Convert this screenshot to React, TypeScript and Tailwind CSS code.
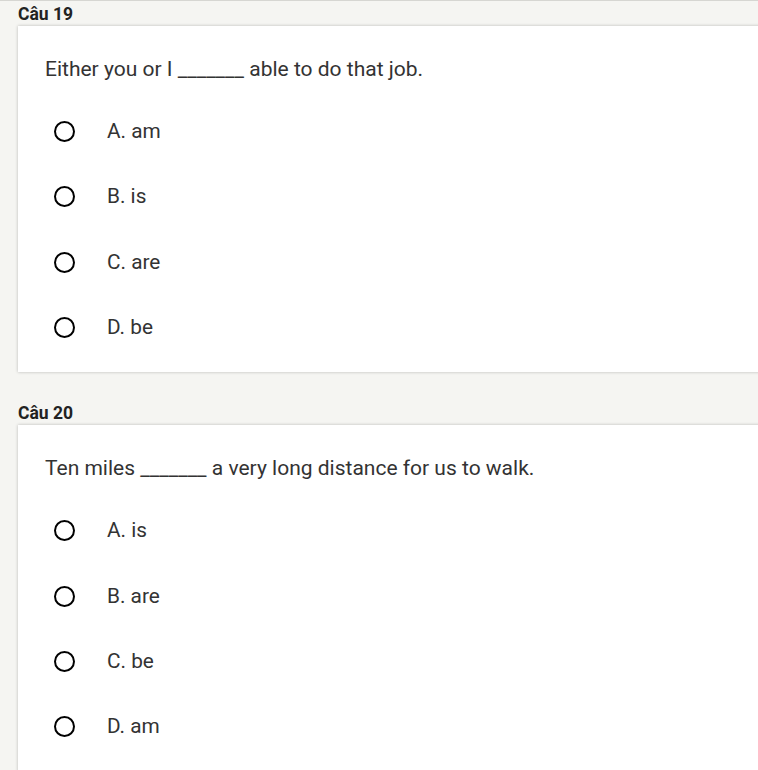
const questions = [
  {
    title: "Câu 19",
    text: "Either you or I _______ able to do that job.",
    options: ["A. am", "B. is", "C. are", "D. be"],
  },
  {
    title: "Câu 20",
    text: "Ten miles _______ a very long distance for us to walk.",
    options: ["A. is", "B. are", "C. be", "D. am"],
  },
];

export default function App() {
  return (
    <div
      className="min-h-screen overflow-hidden border-t border-[#d6d6d2] bg-[#f5f5f2] text-[#333]"
      style={{ fontFamily: "Roboto, 'Liberation Sans', sans-serif" }}
    >
      {questions.map((q) => (
        <section key={q.title} className="pl-[18px] pt-[3px] pb-[28px]">
          <h2 className="h-5 text-[17.5px] font-bold leading-5 text-[#222]">{q.title}</h2>
          <div className="-mr-6 mt-[2px] bg-white pl-[27px] pt-[29px] pb-[12px] shadow-[0_0_3px_rgba(0,0,0,0.25)]">
            <p className="text-[21px] leading-7">{q.text}</p>
            <ul className="mt-[16px]">
              {q.options.map((opt) => (
                <li key={opt} className="flex h-[65.33px] items-center pl-[9px]">
                  <span className="h-[21px] w-[21px] rounded-full border-2 border-black" />
                  <span className="ml-[32px] text-[20.8px]">{opt}</span>
                </li>
              ))}
            </ul>
          </div>
        </section>
      ))}
    </div>
  );
}
